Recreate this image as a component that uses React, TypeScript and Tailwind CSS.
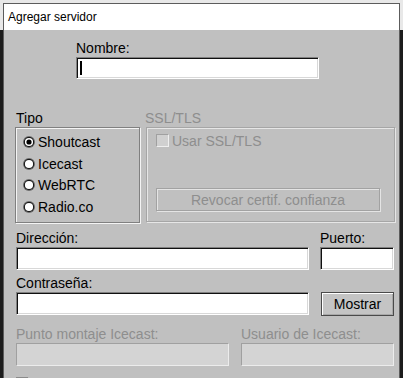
import React from 'react';

// classic sunken edit box
function Field({ className = '', children }: { className?: string; children?: React.ReactNode }) {
  return (
    <div
      className={`relative bg-white border border-t-[#808080] border-l-[#808080] border-r-white border-b-white shadow-[inset_1px_1px_0_#101010,inset_-1px_-1px_0_#d8d8d8] ${className}`}
    >
      {children}
    </div>
  );
}

function DisabledField({ className = '' }: { className?: string }) {
  return (
    <div
      className={`bg-[#d4d4d4] border border-t-[#a0a0a0] border-l-[#a0a0a0] border-r-[#ececec] border-b-[#ececec] ${className}`}
    />
  );
}

function Radio({ label, checked }: { label: string; checked?: boolean }) {
  return (
    <div className="flex items-center h-[21.7px] gap-[3px]">
      <svg width="12" height="12" viewBox="0 0 12 12" className="shrink-0">
        <circle cx="6" cy="6" r="6" fill="#6a6a6a" />
        <circle cx="6" cy="6" r="5.1" fill="#121212" />
        <circle cx="6" cy="6" r="4.1" fill="#ffffff" />
        {checked && <circle cx="6" cy="6" r="2.6" fill="#000000" />}
      </svg>
      <span className="leading-[16px]">{label}</span>
    </div>
  );
}

export default function App() {
  return (
    <div className="w-[403px] h-[378px] overflow-hidden bg-[linear-gradient(to_bottom,#e8e8e8_30px,#1c1c1c_30px)] pl-[3px] pt-[3px] font-['Liberation_Sans',Arial,sans-serif] text-[14px] text-black">
      <div className="w-[397px] h-[400px] border border-[#5c5c5c] border-b-0 flex flex-col">
        {/* title bar */}
        <div className="h-[26px] bg-white flex items-center pl-[4px] text-[12px] leading-[14px]">
          Agregar servidor
        </div>

        {/* dialog body */}
        <div className="flex-1 bg-[#c0c0c0] pl-[12px] pt-[10px]">
          <div className="ml-[60px]">
            <div className="leading-[16px]">Nombre:</div>
            <Field className="mt-[1px] w-[243px] h-[22px]">
              <span className="absolute left-[3px] top-[3px] w-[2px] h-[14px] bg-black" />
            </Field>
          </div>

          <div className="flex mt-[31px]">
            <div className="ml-[-1px]">
              <div className="leading-[16px] pl-[1px]">Tipo</div>
              <div className="mt-[1px] w-[125px] h-[96px] border border-[#808080] shadow-[inset_1px_1px_0_#f4f4f4,1px_1px_0_#f4f4f4] pl-[7px] pt-[3px]">
                <Radio label="Shoutcast" checked />
                <Radio label="Icecast" />
                <Radio label="WebRTC" />
                <Radio label="Radio.co" />
              </div>
            </div>

            <div className="ml-[6px]">
              <div className="leading-[16px] text-[#8e8e8e] ml-[-1px]">SSL/TLS</div>
              <div className="mt-[1px] w-[249px] h-[95px] border border-[#a6a6a6] shadow-[inset_1px_1px_0_#e6e6e6,1px_1px_0_#e6e6e6] pl-[9px] pt-[6px]">
                <div className="flex items-center gap-[3px] h-[13px]">
                  <div className="w-[13px] h-[13px] bg-[#d0d0d0] border border-t-[#a0a0a0] border-l-[#a0a0a0] border-r-[#efefef] border-b-[#efefef]" />
                  <span className="leading-[16px] text-[#8e8e8e]">Usar SSL/TLS</span>
                </div>
                <div className="mt-[41px] w-[224px] h-[23px] border border-[#a2a2a2] shadow-[inset_1px_1px_0_#e4e4e4,1px_1px_0_#e4e4e4] flex items-center justify-center text-[#8e8e8e] leading-[16px]">
                  Revocar certif. confianza
                </div>
              </div>
            </div>
          </div>

          <div className="flex mt-[7px] leading-[16px]">
            <div className="w-[304px]">Dirección:</div>
            <div>Puerto:</div>
          </div>
          <div className="flex mt-[1px]">
            <Field className="w-[293px] h-[23px]" />
            <Field className="ml-[11px] w-[74px] h-[23px]" />
          </div>

          <div className="mt-[5px] leading-[16px]">Contraseña:</div>
          <div className="flex mt-[1px]">
            <Field className="w-[293px] h-[23px]" />
            <div className="ml-[12px] w-[73px] h-[24px] bg-[#c4c4c4] border border-[#4a4a4a] shadow-[inset_1px_1px_0_#ffffff,inset_-1px_-1px_0_#a8a8a8] flex items-center justify-center leading-[16px]">
              Mostrar
            </div>
          </div>

          <div className="flex mt-[10px] leading-[16px] text-[#8e8e8e]">
            <div className="w-[225px]">Punto montaje Icecast:</div>
            <div>Usuario de Icecast:</div>
          </div>
          <div className="flex mt-[1px]">
            <DisabledField className="w-[213px] h-[23px]" />
            <DisabledField className="ml-[12px] w-[153px] h-[23px]" />
          </div>

          <div className="mt-[11px] w-[13px] h-[13px] bg-[#d0d0d0] border border-t-[#8a8a8a] border-l-[#8a8a8a] border-r-[#efefef] border-b-[#efefef]" />
        </div>
      </div>
    </div>
  );
}
